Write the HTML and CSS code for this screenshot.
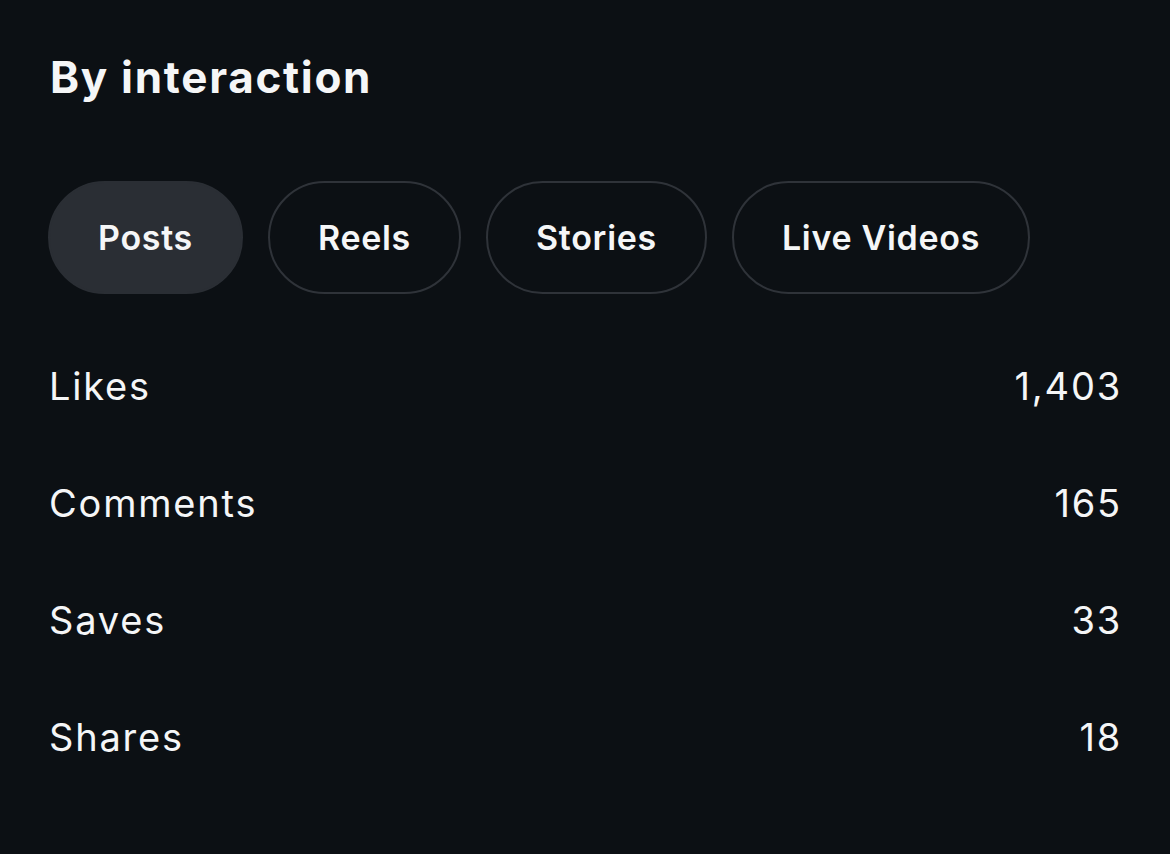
FILE: index.html
```html
<!DOCTYPE html>
<html>
<head>
<meta charset="utf-8">
<link rel="stylesheet" href="styles.css">
</head>
<body>
<main class="panel">
  <h1 class="title">By interaction</h1>
  <div class="tabs">
    <button class="tab active">Posts</button>
    <button class="tab">Reels</button>
    <button class="tab">Stories</button>
    <button class="tab">Live Videos</button>
  </div>
  <ul class="stats">
    <li class="stat"><span>Likes</span><span>1,403</span></li>
    <li class="stat"><span>Comments</span><span>165</span></li>
    <li class="stat"><span>Saves</span><span>33</span></li>
    <li class="stat"><span>Shares</span><span>18</span></li>
  </ul>
</main>
</body>
</html>
```
FILE: styles.css
```css
html, body {
  margin: 0;
  padding: 0;
  background: #0c1014;
  height: 100%;
}
body {
  font-family: Inter, "Noto Sans", sans-serif;
  color: #f5f6f7;
}
.panel {
  padding: 55px 48px 0 48px;
}
.title {
  margin: 0 0 0 2px;
  font-size: 44px;
  line-height: 44px;
  font-weight: 700;
  letter-spacing: 1.7px;
}
.tabs {
  display: flex;
  gap: 25px;
  margin-top: 82px;
}
.tab {
  height: 113px;
  padding: 0 48px;
  border-radius: 57px;
  border: 2px solid #2f3339;
  background: transparent;
  color: #f5f6f7;
  font-family: inherit;
  font-size: 34px;
  font-weight: 600;
  letter-spacing: 0.7px;
}
.tab.active {
  background: #2a2e34;
  border-color: #2a2e34;
}
.stats {
  list-style: none;
  margin: 33px 0 0 0;
  padding: 0 0 0 1px;
}
.stat {
  display: flex;
  justify-content: space-between;
  align-items: center;
  height: 117px;
  font-size: 38px;
  font-weight: 400;
  letter-spacing: 1.8px;
}
```
